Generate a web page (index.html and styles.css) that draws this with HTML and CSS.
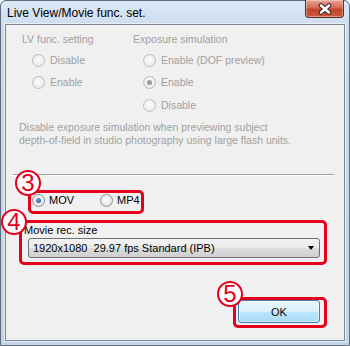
FILE: index.html
```html
<!DOCTYPE html>
<html>
<head>
<meta charset="utf-8">
<link rel="stylesheet" href="styles.css">
</head>
<body>
<div class="page">
  <div class="window">
    <div class="titlebar">
      <span class="title">Live View/Movie func. set.</span>
      <div class="close">
        <svg width="16" height="12" viewBox="0 0 16 12">
          <path d="M4 2.5 L12 9.5 M12 2.5 L4 9.5" stroke="#3a2020" stroke-width="4.6" stroke-linecap="round"/>
          <path d="M4 2.5 L12 9.5 M12 2.5 L4 9.5" stroke="#ffffff" stroke-width="2.6" stroke-linecap="round"/>
        </svg>
      </div>
    </div>
    <div class="client">
      <div class="cols">
        <div class="col col-lv">
          <div class="heading">LV func. setting</div>
          <div class="radio off"><span class="dot"></span>Disable</div>
          <div class="radio off"><span class="dot"></span>Enable</div>
        </div>
        <div class="col">
          <div class="heading">Exposure simulation</div>
          <div class="radio off"><span class="dot"></span>Enable (DOF preview)</div>
          <div class="radio off"><span class="dot checked"></span>Enable</div>
          <div class="radio off last"><span class="dot"></span>Disable</div>
        </div>
      </div>
      <p class="desc">Disable exposure simulation when previewing subject<br>depth-of-field in studio photography using large flash units.</p>
      <div class="sep"></div>
      <div class="format">
        <div class="radio on mov"><span class="dot checked"></span>MOV</div>
        <div class="radio on mp4"><span class="dot"></span>MP4</div>
      </div>
      <div class="label">Movie rec. size</div>
      <div class="select"><span>1920x1080&nbsp; 29.97 fps Standard (IPB)</span><span class="arrow"></span></div>
      <div class="actions"><div class="ok">OK</div></div>
    </div>
  </div>
  <div class="mark box b3"></div>
  <div class="mark box b4"></div>
  <div class="mark box b5"></div>
  <div class="mark num n3">3</div>
  <div class="mark num n4">4</div>
  <div class="mark num n5">5</div>
</div>
</body>
</html>
```
FILE: styles.css
```css
* { box-sizing: border-box; }
html, body { margin: 0; padding: 0; background: #ffffff; }
body { font-family: "Liberation Sans", Arial, sans-serif; font-size: 10.5px; color: #000; }

.page { position: relative; width: 350px; height: 346px; }

.window {
  width: 350px; height: 346px;
  border: 1px solid #5d6b7a;
  border-radius: 6px 6px 0 0;
  background: linear-gradient(#dce8f5, #c9dbee 30px, #c3d5e9);
  display: flex; flex-direction: column;
}

.titlebar {
  height: 23px;
  display: flex; justify-content: space-between; align-items: flex-start;
}
.title { padding: 5px 0 0 6px; font-size: 12px; line-height: 15px; color: #000; }
.close {
  width: 39px; height: 18px; margin: -1px 5px 0 0;
  border: 1px solid #5a2e2a; border-top: none;
  border-radius: 0 0 4px 4px;
  background: linear-gradient(#e9a294, #d36b58 45%, #c2432e 55%, #cf5a3d);
  box-shadow: inset 0 0 0 1px rgba(255,255,255,.35);
  display: flex; align-items: center; justify-content: center;
}

.client {
  flex: 1;
  margin: 0 4px 4px 4px;
  border: 1px solid #7d8a99;
  box-shadow: 0 0 0 1px rgba(255,255,255,.55);
  background: #f0f0f0;
  padding: 0 0 0 13px;
  display: flex; flex-direction: column;
}

.cols { display: flex; padding-left: 3px; margin-top: 4px; }
.col-lv { width: 111px; }
.heading { height: 20px; line-height: 20px; color: #a0a0a0; }

.radio { display: flex; align-items: center; gap: 5px; height: 22px; padding-left: 10px; }
.radio.last { margin-top: 1px; }
.radio.off { color: #a0a0a0; }
.dot {
  width: 13px; height: 13px; border-radius: 50%;
  border: 1px solid #bcbcbc;
  background: radial-gradient(circle at 50% 40%, #fbfbfb, #e6e6e6);
  display: flex; align-items: center; justify-content: center;
}
.radio.on .dot { border-color: #8e8f8f; background: radial-gradient(circle at 50% 40%, #ffffff, #dcdcdc); }
.dot.checked::after {
  content: ""; width: 5px; height: 5px; border-radius: 50%;
  background: #9a9a9a;
}
.radio.on .dot.checked::after { background: radial-gradient(circle at 40% 35%, #6fa3d8, #1a4f8c); }

.desc { margin: 5px 0 0 0; line-height: 13px; color: #a0a0a0; }

.sep {
  margin: 27px 0 0 -6px; width: 321px;
  border-top: 1px solid #a0a0a0; border-bottom: 1px solid #ffffff;
}

.format { display: flex; margin-top: 14px; height: 20px; padding-left: 3px; }
.format .radio { height: 20px; gap: 4px; font-size: 11px; }
.format .mov { width: 78px; padding-left: 10px; }
.format .mp4 { padding-left: 0; }

.label { margin: 13px 0 0 5px; line-height: 14px; height: 14px; font-size: 11px; }

.select {
  margin: 1px 0 0 9px; width: 292px; height: 20px;
  border: 1px solid #707070; border-radius: 3px;
  background: linear-gradient(#f3f3f3, #ebebeb 50%, #dddddd 51%, #cfcfcf);
  display: flex; align-items: center; justify-content: space-between;
  padding: 0 4px 0 4px;
  font-size: 11px;
}
.arrow {
  width: 0; height: 0; margin-right: 1px;
  border-left: 3.5px solid transparent; border-right: 3.5px solid transparent;
  border-top: 4px solid #000;
}

.actions { display: flex; margin: 42px 0 0 219px; }
.ok {
  width: 82px; height: 23px;
  border: 1px solid #3c7fb1; border-radius: 3px;
  background: linear-gradient(#eaf6fd, #d9f0fc 50%, #bee6fd 51%, #a7d9f5);
  box-shadow: inset 0 0 0 1px rgba(255,255,255,.6);
  display: flex; align-items: center; justify-content: center;
  font-size: 11px;
}

.mark { position: absolute; }
.box { border: 3px solid #e5001c; border-radius: 5px; }
.b3 { left: 28px; top: 190px; width: 116px; height: 24px; }
.b4 { left: 19px; top: 220px; width: 308px; height: 45px; }
.b5 { left: 233px; top: 297px; width: 94px; height: 31px; }
.num {
  width: 26px; height: 26px; border-radius: 50%;
  border: 2px solid #e5001c; background: #ffffff; color: #e5001c;
  font-size: 24px; line-height: 22px; text-align: center;
}
.n3 { left: 15px; top: 170px; }
.n4 { left: 1px; top: 209px; }
.n5 { left: 217px; top: 281px; }
```
